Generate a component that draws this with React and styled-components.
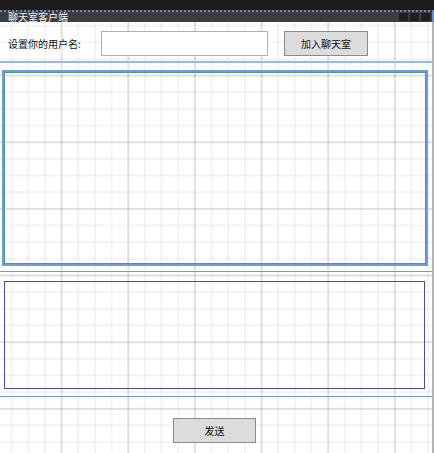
import React from "react";
import styled, { createGlobalStyle } from "styled-components";

const Global = createGlobalStyle`
  html, body { margin: 0; padding: 0; background: #fff; }
  body { font-family: "Noto Sans CJK SC", "Noto Sans", sans-serif; }
  * { box-sizing: border-box; }
`;

const Window = styled.div`
  width: 434px;
  height: 453px;
  display: flex;
  flex-direction: column;
  overflow: hidden;
  background-color: #fff;
  background-image:
    linear-gradient(to right, rgba(0,0,0,0.08) 2px, transparent 2px),
    linear-gradient(to bottom, rgba(0,0,0,0.08) 2px, transparent 2px),
    linear-gradient(to right, rgba(0,0,0,0.045) 2px, transparent 2px),
    linear-gradient(to bottom, rgba(0,0,0,0.045) 2px, transparent 2px);
  background-size:
    66.667px 100%,
    100% 66.667px,
    16.667px 100%,
    100% 16.667px;
  background-position:
    60.67px 0,
    0 8px,
    10.67px 0,
    0 8px;
`;

const Header = styled.div`
  flex: none;
  display: flex;
  flex-direction: column;
`;

const TopStrip = styled.div`
  height: 10px;
  background: #1c1c1c;
`;

const Dotted = styled.div`
  height: 2px;
  background: repeating-linear-gradient(
    to right,
    #6f84b6 0 2px,
    #363a45 2px 4px
  );
`;

const TitleBar = styled.div`
  height: 10px;
  background: #3c3c3c;
  display: flex;
  align-items: center;
  padding-left: 8px;
`;

const Title = styled.span`
  color: #f2f2f2;
  font-size: 10px;
  line-height: 10px;
  flex: 1;
`;

const WinButtons = styled.div`
  display: flex;
  gap: 2px;
  height: 8px;
  margin-right: 2px;
`;

const WinBtn = styled.span`
  width: 9px;
  height: 8px;
  background: #1f1f1f;
`;

const EdgeMark = styled.span`
  width: 2px;
  height: 10px;
  background: #5b8fe0;
`;

const Body = styled.div`
  flex: 1;
  display: flex;
  flex-direction: column;
  border-right: 2px solid #b4b4b4;
`;

const FormRow = styled.div`
  display: flex;
  align-items: center;
  height: 25px;
  margin-top: 9px;
  padding-left: 8px;
`;

const Label = styled.span`
  width: 93px;
  font-size: 10px;
  color: #111;
  white-space: nowrap;
`;

const TextInput = styled.div`
  width: 167px;
  height: 25px;
  border: 1px solid #b0b0b0;
  background: #fff;
`;

const Button = styled.div`
  width: ${(p) => p.$w}px;
  height: 25px;
  margin-left: ${(p) => p.$ml}px;
  margin-top: ${(p) => p.$mt || 0}px;
  background: #dcdcdc;
  border: 1px solid #8a8a8a;
  display: flex;
  align-items: center;
  justify-content: center;
  font-size: 10px;
  color: #111;
`;

const Rule = styled.div`
  width: 432px;
  height: ${(p) => p.$h}px;
  margin-top: ${(p) => p.$mt}px;
  background: ${(p) => p.$c};
  flex: none;
`;

const MessageArea = styled.div`
  flex: none;
  width: 426px;
  height: 196px;
  margin: 7px 0 0 2px;
  border: 2px solid #6a9cea;
  box-shadow: inset 0 0 0 1px #5a9a68;
`;

const InputArea = styled.div`
  flex: none;
  width: 421px;
  height: 108px;
  margin: 9px 0 0 4px;
  border: 1px solid #4848b0;
`;

export default function App() {
  return (
    <>
      <Global />
      <Window>
        <Header>
          <TopStrip />
          <Dotted />
          <TitleBar>
            <Title>聊天室客户端</Title>
            <WinButtons>
              <WinBtn />
              <WinBtn />
              <WinBtn />
            </WinButtons>
            <EdgeMark />
          </TitleBar>
        </Header>
        <Body>
          <FormRow>
            <Label>设置你的用户名:</Label>
            <TextInput />
            <Button $w={84} $ml={16}>加入聊天室</Button>
          </FormRow>
          <Rule $h={2} $mt={5} $c="#94b8f2" />
          <MessageArea />
          <Rule $h={1} $mt={5} $c="#6d9ceb" />
          <InputArea />
          <Rule $h={1} $mt={7} $c="#6d9ceb" />
          <Button $w={83} $ml={173} $mt={21}>发送</Button>
        </Body>
      </Window>
    </>
  );
}
